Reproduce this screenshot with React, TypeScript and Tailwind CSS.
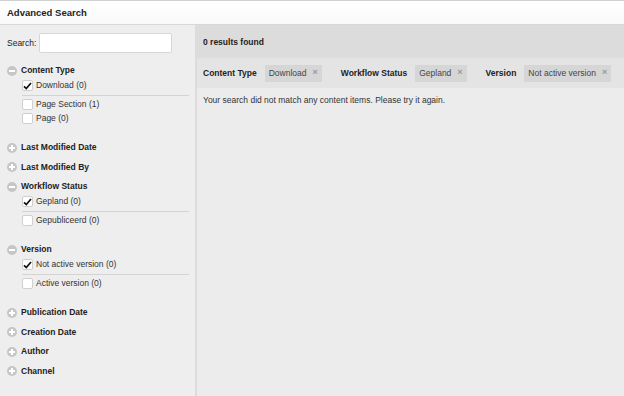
import React from 'react';

type Option = { label: string; checked?: boolean };
type Section = { title: string; open?: boolean; options?: Option[][] };

const sections: Section[] = [
  {
    title: 'Content Type',
    open: true,
    options: [[{ label: 'Download (0)', checked: true }], [{ label: 'Page Section (1)' }, { label: 'Page (0)' }]],
  },
  { title: 'Last Modified Date' },
  { title: 'Last Modified By' },
  {
    title: 'Workflow Status',
    open: true,
    options: [[{ label: 'Gepland (0)', checked: true }], [{ label: 'Gepubliceerd (0)' }]],
  },
  {
    title: 'Version',
    open: true,
    options: [[{ label: 'Not active version (0)', checked: true }], [{ label: 'Active version (0)' }]],
  },
  { title: 'Publication Date' },
  { title: 'Creation Date' },
  { title: 'Author' },
  { title: 'Channel' },
];

const filters = [
  { label: 'Content Type', value: 'Download' },
  { label: 'Workflow Status', value: 'Gepland' },
  { label: 'Version', value: 'Not active version' },
];

function ToggleIcon({ open }: { open?: boolean }) {
  return (
    <span className="relative w-[10px] h-[10px] rounded-full bg-[#c6c6c6] shrink-0">
      <span className="absolute left-[2px] top-[4px] w-[6px] h-[2px] bg-white" />
      {!open && <span className="absolute left-[4px] top-[2px] w-[2px] h-[6px] bg-white" />}
    </span>
  );
}

function Checkbox({ checked }: { checked?: boolean }) {
  return (
    <span className="w-[11px] h-[11px] rounded-[2px] bg-white border border-[#cfcfcf] flex items-center justify-center shrink-0">
      {checked && (
        <svg width="9" height="8" viewBox="0 0 9 8">
          <path d="M1 4.3 L3.3 6.6 L8 1" fill="none" stroke="#111" strokeWidth="1.7" />
        </svg>
      )}
    </span>
  );
}

export default function App() {
  return (
    <div className="w-[624px] h-[396px] flex flex-col text-[#222] font-['Liberation_Sans',Arial,sans-serif] overflow-hidden">
      <div className="h-[25px] shrink-0 bg-gradient-to-b from-white to-[#f9f9f9] border-t border-[#d2d2d2] border-b border-b-[#d8d8d8] px-[7px] pt-[1px] flex items-center">
        <span className="text-[9.5px] font-bold">Advanced Search</span>
      </div>

      <div className="flex-1 flex min-h-0">
        <div className="w-[197px] shrink-0 bg-[#eeeeee] border-r-2 border-[#dcdcdc] pt-[8px]">
          <div className="h-[20px] flex items-center pl-[7px]">
            <span className="text-[8.5px] w-[32px]">Search:</span>
            <input className="w-[133px] h-[20px] bg-white border border-[#d6d6d6] rounded-[2px] outline-none" />
          </div>

          <div className="mt-[8px]">
            {sections.map((s) => (
              <div key={s.title}>
                <div className="h-[19.5px] flex items-center pl-[7px] gap-[4px]">
                  <ToggleIcon open={s.open} />
                  <span className="text-[8.5px] font-bold">{s.title}</span>
                </div>
                {s.open && s.options && (
                  <div className="ml-[22px] mr-[6px] -mt-[0.75px] mb-[13.25px]">
                    {s.options.map((group, gi) => (
                      <div key={gi} className={gi > 0 ? 'border-t border-[#d4d4d4] mt-[3px] pt-[3px] flex flex-col gap-[2px]' : ''}>
                        {group.map((o) => (
                          <div key={o.label} className="h-[12px] flex items-center gap-[3px]">
                            <Checkbox checked={o.checked} />
                            <span className="text-[8.5px] text-[#333]">{o.label}</span>
                          </div>
                        ))}
                      </div>
                    ))}
                  </div>
                )}
              </div>
            ))}
          </div>
        </div>

        <div className="flex-1 bg-[#ececec]">
          <div className="h-[33px] bg-[#dcdcdc] pl-[6px] pt-[1px] flex items-center">
            <span className="text-[8.5px] font-bold">0 results found</span>
          </div>
          <div className="h-[30px] bg-[#e4e4e4] pl-[6px] flex items-center gap-[19px]">
            {filters.map((f) => (
              <div key={f.label} className="flex items-center gap-[8px]">
                <span className="text-[8.5px] font-bold">{f.label}</span>
                <span className="h-[17px] bg-[#d6d6d6] px-[4px] flex items-center gap-[6px] text-[8.5px] text-[#444]">
                  {f.value}
                  <span className="text-[#9a9a9a] text-[9px] font-bold">×</span>
                </span>
              </div>
            ))}
          </div>
          <div className="pl-[6px] mt-[6px] text-[8.5px] text-[#333]">
            Your search did not match any content items. Please try it again.
          </div>
        </div>
      </div>
    </div>
  );
}
